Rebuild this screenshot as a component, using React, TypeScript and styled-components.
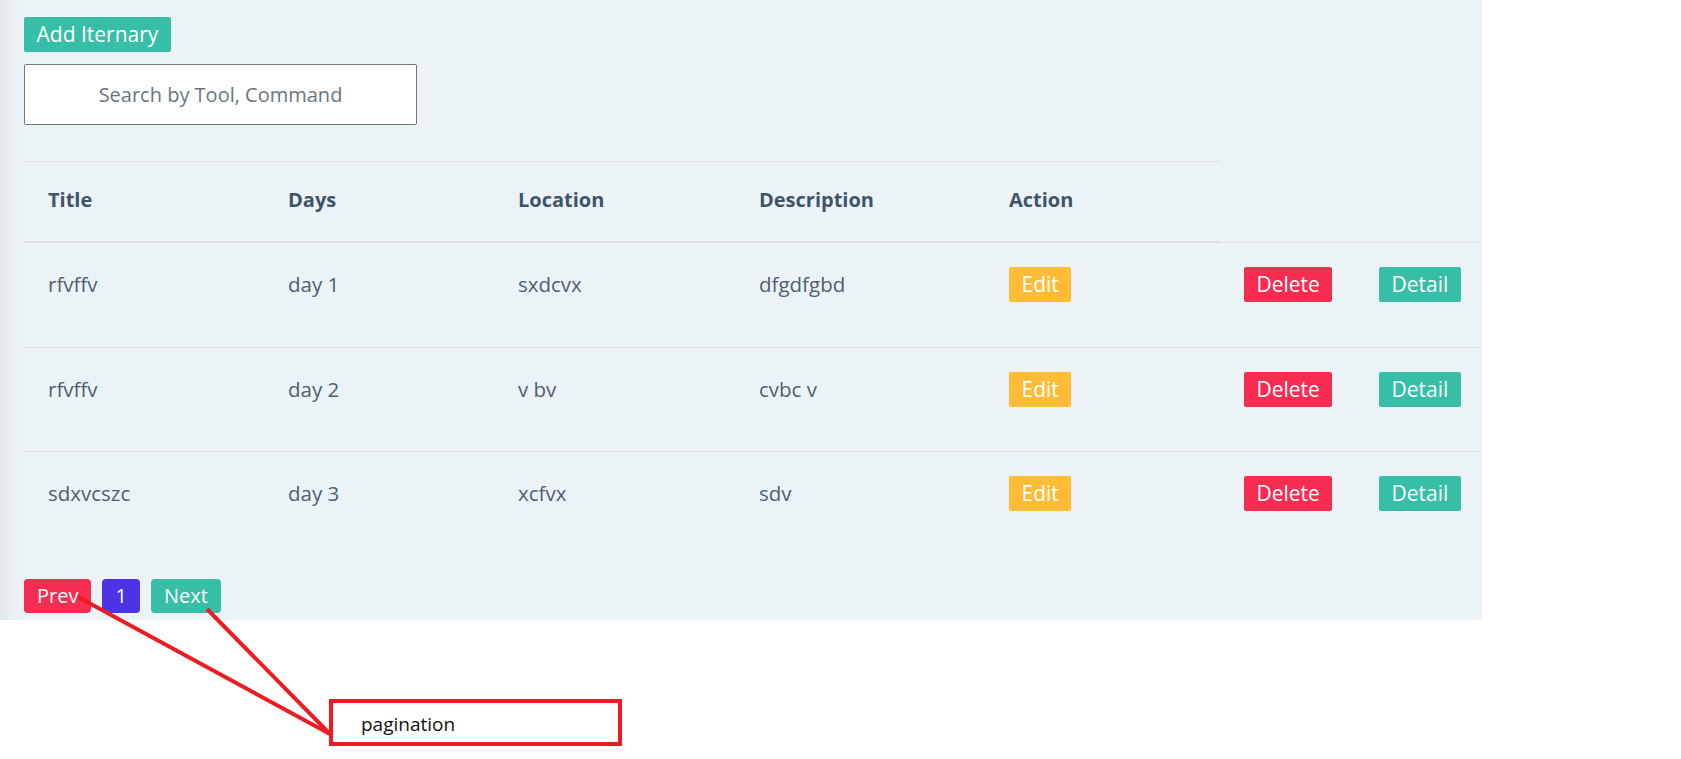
import React from "react";
import styled, { createGlobalStyle } from "styled-components";

const GlobalStyle = createGlobalStyle`
  html, body { margin: 0; padding: 0; background: #ffffff; }
  body { font-family: "Open Sans", "Noto Sans", sans-serif; }
  * { box-sizing: border-box; }
`;

type Tone = "teal" | "red" | "yellow" | "blue";

const toneColor: Record<Tone, string> = {
  teal: "#36bea6",
  red: "#f62d51",
  yellow: "#ffbc34",
  blue: "#4b33e6",
};

const Page = styled.div`
  position: relative;
  width: 1681px;
  height: 759px;
  overflow: hidden;
`;

const Panel = styled.section`
  width: 1482px;
  padding: 17px 0 7px 24px;
  background: linear-gradient(to right, #e2e8ec 0px, #ecf3f7 22px);
  display: flex;
  flex-direction: column;
  align-items: flex-start;
`;

const Button = styled.button<{ $tone: Tone; $round?: boolean }>`
  display: inline-flex;
  align-items: center;
  justify-content: center;
  vertical-align: top;
  height: 35px;
  padding: 0 12.5px;
  border: none;
  border-radius: ${(p) => (p.$round ? "4px" : "2px")};
  background: ${(p) => toneColor[p.$tone]};
  color: #ffffff;
  font-family: "Open Sans", "Noto Sans", sans-serif;
  font-size: 21px;
  line-height: 1;
  cursor: pointer;
`;

const AddButton = styled(Button)`
  margin-bottom: 12px;
`;

const Search = styled.input`
  width: 393px;
  height: 61px;
  border: 1px solid #767676;
  border-radius: 2px;
  background: #ffffff;
  font-family: "Open Sans", "Noto Sans", sans-serif;
  font-size: 20px;
  text-align: center;
  color: #495057;
  outline: none;
  margin-bottom: 36px;
  &::placeholder {
    color: #6c757d;
  }
`;

const Table = styled.table`
  border-collapse: collapse;
  table-layout: fixed;
  width: 1458px;
`;

const HeadCell = styled.th`
  text-align: left;
  font-weight: 700;
  font-size: 20px;
  line-height: 24px;
  color: #3e5569;
  padding: 26px 24px 29px;
  border-top: 1px solid #dee2e6;
  border-bottom: 2px solid #dce1e5;
`;

const Cell = styled.td`
  text-align: left;
  vertical-align: top;
  font-size: 20.5px;
  line-height: 35px;
  height: 104px;
  color: #4f5e70;
  padding: 24px 24px 44px;
  border-top: 1px solid #dee2e6;
`;

const Row = styled.tr<{ $first?: boolean }>`
  & > td {
    height: ${(p) => (p.$first ? "105px" : "104px")};
  }
`;

const Pager = styled.nav`
  display: flex;
  gap: 11px;
  margin-top: 24px;
`;

const PageButton = styled(Button)`
  height: 34px;
  padding: 0 13px;
  font-size: 20px;
`;

const Callout = styled.div`
  margin: 79px 0 0 329px;
  width: 293px;
  height: 47px;
  border: 4px solid #ed1c24;
  padding: 4px 0 0 28px;
  font-family: "Open Sans", "Noto Sans", sans-serif;
  font-size: 19px;
  line-height: 35px;
  color: #111111;
`;

const Arrows = styled.svg`
  position: absolute;
  left: 0;
  top: 0;
  pointer-events: none;
`;

const columns = [240, 230, 241, 250, 235, 135, 127];

const rows = [
  { title: "rfvffv", days: "day 1", location: "sxdcvx", description: "dfgdfgbd" },
  { title: "rfvffv", days: "day 2", location: "v bv", description: "cvbc v" },
  { title: "sdxvcszc", days: "day 3", location: "xcfvx", description: "sdv" },
];

export default function App() {
  return (
    <Page>
      <GlobalStyle />
      <Panel>
        <AddButton $tone="teal">Add Iternary</AddButton>
        <Search placeholder="Search by Tool, Command" />
        <Table>
          <colgroup>
            {columns.map((w, i) => (
              <col key={i} style={{ width: w }} />
            ))}
          </colgroup>
          <thead>
            <tr>
              <HeadCell>Title</HeadCell>
              <HeadCell>Days</HeadCell>
              <HeadCell>Location</HeadCell>
              <HeadCell>Description</HeadCell>
              <HeadCell>Action</HeadCell>
            </tr>
          </thead>
          <tbody>
            {rows.map((r, i) => (
              <Row key={i} $first={i === 0}>
                <Cell>{r.title}</Cell>
                <Cell>{r.days}</Cell>
                <Cell>{r.location}</Cell>
                <Cell>{r.description}</Cell>
                <Cell>
                  <Button $tone="yellow">Edit</Button>
                </Cell>
                <Cell>
                  <Button $tone="red">Delete</Button>
                </Cell>
                <Cell>
                  <Button $tone="teal">Detail</Button>
                </Cell>
              </Row>
            ))}
          </tbody>
        </Table>
        <Pager>
          <PageButton $tone="red" $round>Prev</PageButton>
          <PageButton $tone="blue" $round>1</PageButton>
          <PageButton $tone="teal" $round>Next</PageButton>
        </Pager>
      </Panel>
      <Callout>pagination</Callout>
      <Arrows width="1681" height="759" viewBox="0 0 1681 759">
        <line x1="78" y1="597" x2="330" y2="734" stroke="#ed1c24" strokeWidth="4" />
        <line x1="207" y1="609" x2="330" y2="734" stroke="#ed1c24" strokeWidth="4" />
      </Arrows>
    </Page>
  );
}
